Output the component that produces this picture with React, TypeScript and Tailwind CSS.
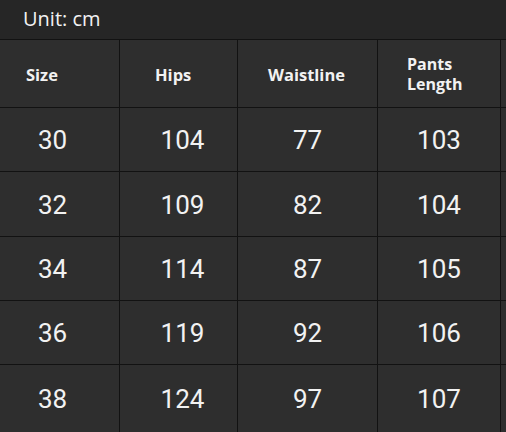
import React from 'react';

const rows = [
  ['30', '104', '77', '103'],
  ['32', '109', '82', '104'],
  ['34', '114', '87', '105'],
  ['36', '119', '92', '106'],
  ['38', '124', '97', '107'],
];

const cols = 'grid grid-cols-[119px_117px_139px_122px_1fr] gap-px';

export default function App() {
  return (
    <div className="w-[506px] h-[432px] overflow-hidden bg-[#121212] flex flex-col gap-px font-['Open_Sans',sans-serif] text-[#f2f2f2]">
      <div className="h-[39px] shrink-0 bg-[#262626] flex items-center pl-[23px] pb-[1px] text-[20px] leading-none">Unit: cm</div>

      {/* header row */}
      <div className={`${cols} h-[67px] shrink-0`}>
        <div className="bg-[#2e2e2e] flex items-center pl-[26px] pt-[3px] text-[16.5px] font-bold">Size</div>
        <div className="bg-[#2e2e2e] flex items-center pl-[35px] pt-[3px] text-[16.5px] font-bold">Hips</div>
        <div className="bg-[#2e2e2e] flex items-center pl-[30px] pt-[3px] text-[16.5px] font-bold">Waistline</div>
        <div className="bg-[#2e2e2e] flex flex-col justify-center pl-[29px] text-[16px] font-bold leading-[20px]">
          <span>Pants</span>
          <span>Length</span>
        </div>
        <div className="bg-[#2e2e2e]" />
      </div>

      {rows.map((r, i) => (
        <div key={r[0]} className={`${cols} ${i === rows.length - 1 ? 'flex-1' : i === 1 ? 'h-[64px]' : 'h-[63px]'} shrink-0`}>
          {r.map((v, j) => (
            <div
              key={j}
              className={`bg-[#2e2e2e] flex items-center justify-center pt-[2px] font-['Roboto',sans-serif] text-[26px] ${j === 0 ? 'pr-[14px]' : j === 1 ? 'pl-[8px]' : ''}`}
            >
              {v}
            </div>
          ))}
          <div className="bg-[#2e2e2e]" />
        </div>
      ))}
    </div>
  );
}
